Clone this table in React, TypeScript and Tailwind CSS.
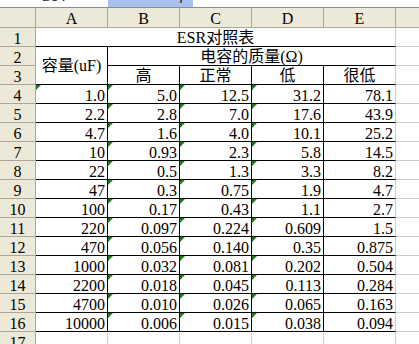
const DATA: string[][] = [
  ["1.0", "5.0", "12.5", "31.2", "78.1"],
  ["2.2", "2.8", "7.0", "17.6", "43.9"],
  ["4.7", "1.6", "4.0", "10.1", "25.2"],
  ["10", "0.93", "2.3", "5.8", "14.5"],
  ["22", "0.5", "1.3", "3.3", "8.2"],
  ["47", "0.3", "0.75", "1.9", "4.7"],
  ["100", "0.17", "0.43", "1.1", "2.7"],
  ["220", "0.097", "0.224", "0.609", "1.5"],
  ["470", "0.056", "0.140", "0.35", "0.875"],
  ["1000", "0.032", "0.081", "0.202", "0.504"],
  ["2200", "0.018", "0.045", "0.113", "0.284"],
  ["4700", "0.010", "0.026", "0.065", "0.163"],
  ["10000", "0.006", "0.015", "0.038", "0.094"],
]

// F is scrolled mostly out of view, its letter never shows
const COLS = ["A", "B", "C", "D", "E", ""]

// little green "number stored as text" marker
function Tri() {
  return (
    <svg className="absolute left-0 top-0" width="5" height="5">
      <polygon points="0,0 5,0 0,5" fill="#1f7a1f" />
    </svg>
  )
}

function RowHead({ n }: { n: number }) {
  return (
    <div className="bg-[#ece9d8] border-r border-b border-[#aca899] flex justify-center pt-[2px]">
      {n}
    </div>
  )
}

export default function App() {
  return (
    <div className="w-[419px] h-[344px] overflow-hidden bg-white text-black text-[16px] leading-[18px] font-['Liberation_Serif','Noto_Sans_CJK_SC',serif]">
      {/* formula bar, mostly scrolled off */}
      <div className="h-[8px] border-b border-[#8e8e8e] flex overflow-hidden">
        <div className="w-[108px] h-[7px] overflow-hidden relative">
          <span className="absolute left-[40px] top-[-13px] text-[15px]">G14</span>
        </div>
        <div className="w-[85px] h-[7px] bg-[#a6c1ee] overflow-hidden relative">
          <span className="absolute left-[72px] top-[-13px] text-[14px] italic">fx</span>
        </div>
      </div>

      <div className="w-[468px] grid grid-cols-[36px_72px_72px_72px_72px_72px_72px] grid-rows-[20px_repeat(17,19px)]">
        {/* column headers */}
        <div className="bg-[#ece9d8] border-r border-b border-[#aca899]" />
        {COLS.map((c, k) => (
          <div key={k} className="bg-[#ece9d8] border-r border-b border-[#aca899] flex justify-center pt-[2px]">
            {c}
          </div>
        ))}

        {/* row 1 */}
        <RowHead n={1} />
        <div className="col-span-5 border-b border-black border-r border-r-[#cccccc] flex justify-center pt-[1px]">
          ESR对照表
        </div>
        <div className="border-r border-b border-[#cccccc]" />

        {/* rows 2-3 */}
        <RowHead n={2} />
        <div className="row-span-2 border-r border-b border-black flex items-center justify-center pt-[1px]">
          容量(uF)
        </div>
        <div className="col-span-4 border-b border-black border-r border-r-[#cccccc] flex justify-center pt-[1px]">
          电容的质量(Ω)
        </div>
        <div className="border-r border-b border-[#cccccc]" />
        <RowHead n={3} />
        <div className="border-r border-b border-black flex justify-center pt-[1px]">高</div>
        <div className="border-r border-b border-black flex justify-center pt-[1px]">正常</div>
        <div className="border-r border-b border-black flex justify-center pt-[1px]">低</div>
        <div className="border-b border-black border-r border-r-[#cccccc] flex justify-center pt-[1px]">很低</div>
        <div className="border-r border-b border-[#cccccc]" />

        {/* data rows */}
        {DATA.map((row, i) => (
          <div key={i} className="contents">
            <RowHead n={i + 4} />
            {row.map((v, j) => (
              <div
                key={j}
                className={`relative flex justify-end pr-[2px] pt-[2px] border-b border-black border-r ${
                  j === 4 ? "border-r-[#cccccc]" : "border-r-black"
                }`}
              >
                {(j > 0 && j < 4) || (i === 0 && j === 0) ? <Tri /> : null}
                {v}
              </div>
            ))}
            <div className="border-r border-b border-[#cccccc]" />
          </div>
        ))}

        {/* row 17 */}
        <RowHead n={17} />
        {[0, 1, 2, 3, 4, 5].map(k => (
          <div key={k} className="border-r border-b border-[#cccccc]" />
        ))}
      </div>
    </div>
  )
}
